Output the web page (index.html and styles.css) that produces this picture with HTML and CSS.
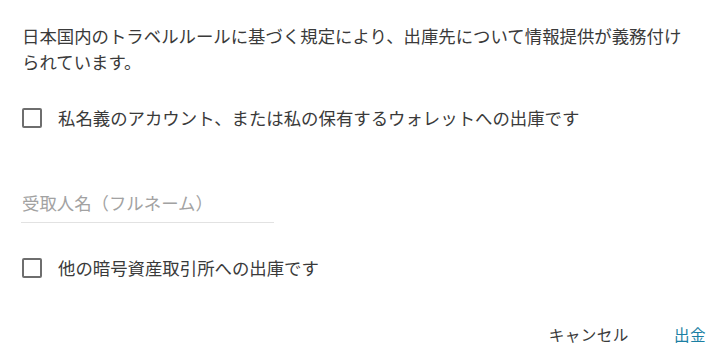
FILE: index.html
```html
<!DOCTYPE html>
<html lang="ja">
<head>
<meta charset="utf-8">
<link rel="stylesheet" href="styles.css">
</head>
<body>
<div class="dialog">
  <p class="notice">日本国内のトラベルルールに基づく規定により、出庫先について情報提供が義務付けられています。</p>
  <label class="check-row first">
    <input type="checkbox" class="box">
    <span class="label">私名義のアカウント、または私の保有するウォレットへの出庫です</span>
  </label>
  <div class="field">
    <input class="name-input" type="text" placeholder="受取人名（フルネーム）">
  </div>
  <label class="check-row second">
    <input type="checkbox" class="box">
    <span class="label">他の暗号資産取引所への出庫です</span>
  </label>
  <div class="actions">
    <button class="btn cancel">キャンセル</button>
    <button class="btn primary">出金</button>
  </div>
</div>
</body>
</html>
```
FILE: styles.css
```css
html, body {
  margin: 0;
  padding: 0;
  background: #ffffff;
}
.dialog {
  font-family: "Noto Sans CJK JP", "Noto Sans", sans-serif;
  color: #3a3a3a;
  padding: 23px 22px 0 22px;
  box-sizing: border-box;
  width: 720px;
}
.notice {
  margin: 0;
  font-size: 17.4px;
  line-height: 26px;
}
.check-row {
  display: flex;
  align-items: center;
  height: 46px;
  cursor: pointer;
}
.check-row.first {
  margin-top: 20px;
}
.check-row.second {
  margin-top: 22px;
}
.box {
  appearance: none;
  -webkit-appearance: none;
  margin: 0 16px 0 0;
  width: 20px;
  height: 20px;
  border: 2px solid #6e6e6e;
  border-radius: 2px;
  box-sizing: border-box;
  flex: none;
}
.label {
  font-size: 17.4px;
  line-height: 26px;
}
.field {
  margin-top: 49px;
  margin-left: -1px;
  width: 253px;
  border-bottom: 1px solid #e2e2e2;
  padding-bottom: 6px;
}
.name-input {
  display: block;
  width: 100%;
  border: none;
  outline: none;
  padding: 0 0 0 1px;
  margin: 0;
  font-family: "Noto Sans CJK JP", "Noto Sans", sans-serif;
  font-size: 17.4px;
  line-height: 26px;
  height: 26px;
  color: #3a3a3a;
  background: transparent;
}
.name-input::placeholder {
  color: #a2a2a2;
}
.actions {
  display: flex;
  justify-content: flex-end;
  margin-top: 30px;
  margin-right: -8px;
  gap: 45px;
}
.btn {
  font-family: "Noto Sans CJK JP", "Noto Sans", sans-serif;
  font-size: 15.6px;
  letter-spacing: 0.45px;
  line-height: 26px;
  border: none;
  background: transparent;
  padding: 0;
  cursor: pointer;
}
.btn.cancel {
  color: #3a3a3a;
}
.btn.primary {
  color: #1b7fa3;
}
```
